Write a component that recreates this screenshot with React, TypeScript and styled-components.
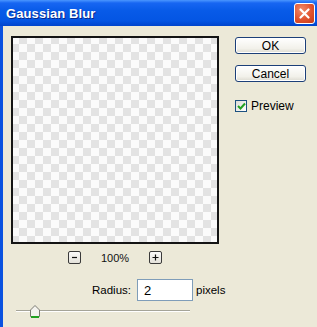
import React from "react";
import styled, { createGlobalStyle } from "styled-components";

const GlobalStyle = createGlobalStyle`
  html, body {
    margin: 0;
    padding: 0;
    background: #ece9d8;
  }
  body {
    font-family: "Liberation Sans", Arial, sans-serif;
  }
`;

const Window = styled.div`
  width: 317px;
  height: 327px;
  display: flex;
  flex-direction: column;
  background: #0a52e0;
  overflow: hidden;
`;

const TitleBar = styled.div`
  height: 26px;
  flex: none;
  display: flex;
  align-items: center;
  justify-content: space-between;
  padding: 0 2px 0 6px;
  background: linear-gradient(
    to bottom,
    #4a96ff 0,
    #1766f2 3px,
    #085be8 40%,
    #0455e3 80%,
    #0044cc 100%
  );
`;

const Title = styled.span`
  color: #fff;
  font-size: 13px;
  font-weight: bold;
  letter-spacing: 0.1px;
  text-shadow: 1px 1px 0 #0a2a8a;
`;

const CloseButton = styled.div`
  width: 21px;
  height: 21px;
  box-sizing: border-box;
  border: 1px solid #fff;
  border-radius: 3px;
  display: flex;
  align-items: center;
  justify-content: center;
  background: radial-gradient(circle at 35% 30%, #f08a6a 0, #e0522e 55%, #c43a18 100%);
`;

const Body = styled.div`
  flex: 1;
  margin-left: 3px;
  background: #ece9d8;
  padding: 10px 0 0 8px;
  display: flex;
  flex-direction: column;
`;

const Main = styled.div`
  display: flex;
  align-items: flex-start;
`;

const PreviewColumn = styled.div`
  width: 208px;
  display: flex;
  flex-direction: column;
`;

const Preview = styled.div`
  width: 208px;
  height: 208px;
  box-sizing: border-box;
  border: 2px solid #141414;
  background-color: #fbfbfb;
  background-image: conic-gradient(
    #e3e3e3 0 25%,
    #fbfbfb 0 50%,
    #e3e3e3 0 75%,
    #fbfbfb 0 100%
  );
  background-size: 16px 16px;
  background-position: -2px -2px;
`;

const ZoomRow = styled.div`
  margin-top: 7px;
  height: 13px;
  display: flex;
  align-items: center;
  justify-content: center;
  gap: 20px;
`;

const ZoomButton = styled.div`
  width: 13px;
  height: 13px;
  box-sizing: border-box;
  border: 1px solid #3a3a3a;
  border-radius: 2px;
  background: linear-gradient(#fafafa, #e4e2da);
  display: flex;
  align-items: center;
  justify-content: center;
`;

const ZoomLabel = styled.span`
  width: 28px;
  text-align: center;
  font-size: 11px;
  color: #111;
`;

const Side = styled.div`
  margin: 1px 0 0 16px;
  display: flex;
  flex-direction: column;
`;

const Button = styled.div<{ $gap?: number }>`
  width: 71px;
  height: 17px;
  box-sizing: border-box;
  margin-top: ${({ $gap }) => $gap ?? 0}px;
  border: 1px solid #1c3f78;
  border-radius: 3px;
  background: linear-gradient(#ffffff, #f2f1ea 70%, #dcdad0);
  box-shadow: inset 0 0 0 1px #ffffff;
  display: flex;
  align-items: center;
  justify-content: center;
  font-size: 12px;
  color: #000;
`;

const CheckRow = styled.div`
  margin-top: 17px;
  display: flex;
  align-items: center;
  gap: 4px;
  font-size: 12px;
  color: #000;
`;

const CheckBox = styled.div`
  width: 12px;
  height: 12px;
  box-sizing: border-box;
  border: 1px solid #1c5180;
  background: linear-gradient(135deg, #dcdcd6, #ffffff);
  display: flex;
  align-items: center;
  justify-content: center;
`;

const RadiusRow = styled.div`
  margin-top: 15px;
  padding-left: 81px;
  display: flex;
  align-items: center;
  font-size: 11.5px;
  color: #000;
`;

const Input = styled.div`
  width: 56px;
  height: 22px;
  box-sizing: border-box;
  margin: 0 3px 0 6px;
  border: 1px solid #7f9db9;
  background: #fff;
  padding-left: 6px;
  display: flex;
  align-items: center;
  font-size: 13px;
`;

const Slider = styled.div`
  position: relative;
  margin: 4px 0 0 5px;
  width: 174px;
  height: 12px;
`;

const Track = styled.div`
  position: absolute;
  left: 0;
  right: 0;
  top: 5px;
  height: 2px;
  background: linear-gradient(#a5a498 50%, #fff 50%);
`;

const Thumb = styled.svg`
  position: absolute;
  left: 14px;
  top: 0;
`;

export default function App() {
  return (
    <>
      <GlobalStyle />
      <Window>
        <TitleBar>
          <Title>Gaussian Blur</Title>
          <CloseButton>
            <svg width="11" height="11" viewBox="0 0 11 11">
              <path d="M1.5 1.5 L9.5 9.5 M9.5 1.5 L1.5 9.5" stroke="#fff" strokeWidth="2.2" strokeLinecap="round" />
            </svg>
          </CloseButton>
        </TitleBar>
        <Body>
          <Main>
            <PreviewColumn>
              <Preview />
              <ZoomRow>
                <ZoomButton>
                  <svg width="7" height="7" viewBox="0 0 7 7">
                    <path d="M1 3.5 H6" stroke="#111" strokeWidth="1.2" />
                  </svg>
                </ZoomButton>
                <ZoomLabel>100%</ZoomLabel>
                <ZoomButton>
                  <svg width="7" height="7" viewBox="0 0 7 7">
                    <path d="M0.5 3.5 H6.5 M3.5 0.5 V6.5" stroke="#111" strokeWidth="1.2" />
                  </svg>
                </ZoomButton>
              </ZoomRow>
            </PreviewColumn>
            <Side>
              <Button>OK</Button>
              <Button $gap={11}>Cancel</Button>
              <CheckRow>
                <CheckBox>
                  <svg width="9" height="8" viewBox="0 0 9 8">
                    <path d="M1 4 L3.5 6.5 L8 1.5" fill="none" stroke="#21a121" strokeWidth="2" />
                  </svg>
                </CheckBox>
                Preview
              </CheckRow>
            </Side>
          </Main>
          <RadiusRow>
            Radius:
            <Input>2</Input>
            pixels
          </RadiusRow>
          <Slider>
            <Track />
            <Thumb width="10" height="13" viewBox="0 0 10 13">
              <path d="M0.5 11.5 V5 L5 0.5 L9.5 5 V11.5 Z" fill="#f4f3ee" stroke="#7a7a72" />
              <rect x="1" y="11" width="8" height="2" fill="#21a121" />
            </Thumb>
          </Slider>
        </Body>
      </Window>
    </>
  );
}
